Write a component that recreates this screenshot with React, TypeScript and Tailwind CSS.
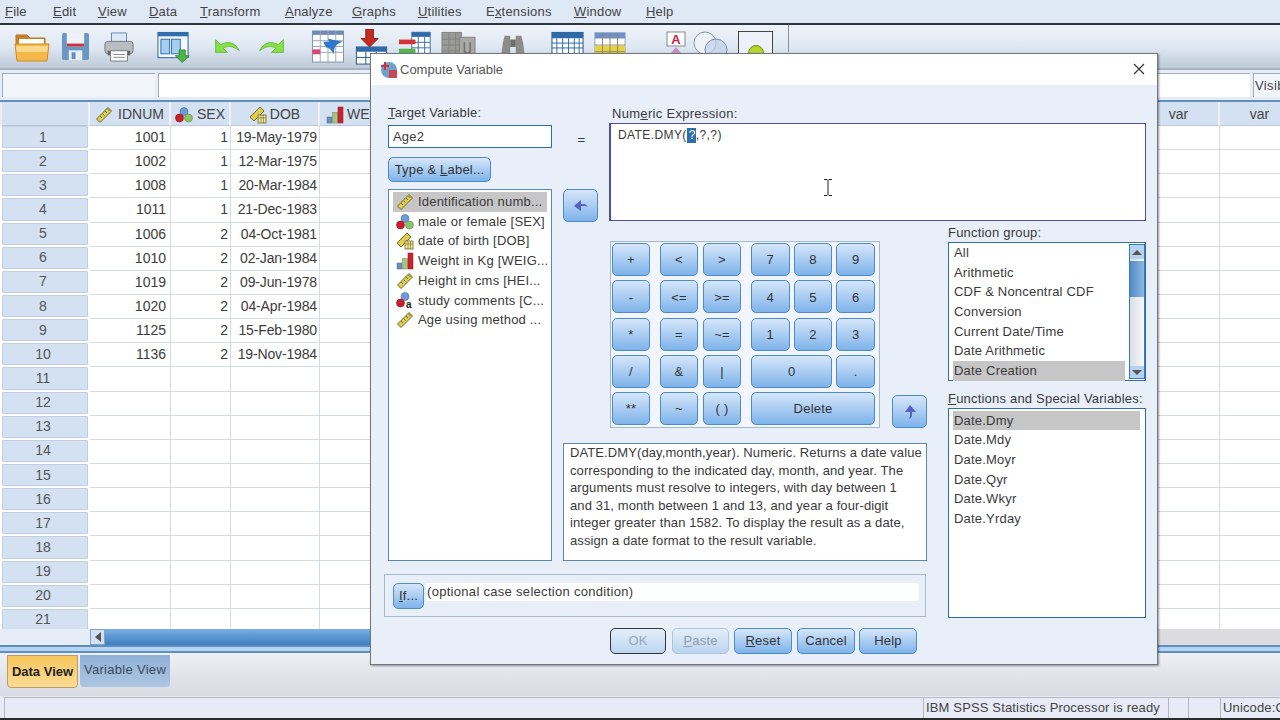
import React from "react"

const font = { fontFamily: '"Liberation Sans", Arial, sans-serif' }

const menus = [
  { u: "F", rest: "ile", w: "w-[48px]" },
  { u: "E", rest: "dit", w: "w-[45px]" },
  { u: "V", rest: "iew", w: "w-[51px]" },
  { u: "D", rest: "ata", w: "w-[51px]" },
  { u: "T", rest: "ransform", w: "w-[85px]" },
  { u: "A", rest: "nalyze", w: "w-[67px]" },
  { u: "G", rest: "raphs", w: "w-[66px]" },
  { u: "U", rest: "tilities", w: "w-[68px]" },
  { pre: "E", u: "x", rest: "tensions", w: "w-[88px]" },
  { u: "W", rest: "indow", w: "w-[72px]" },
  { u: "H", rest: "elp", w: "w-[40px]" },
]

function Ruler({ className = "" }: { className?: string }) {
  return (
    <svg viewBox="0 0 18 18" className={className}>
      <path d="M1.5 13 13 1.5 16.500 5 5 16.500Z" fill="#e0cc50" stroke="#6d6a30" strokeWidth="1" />
      <path d="M5 10l2 2M7.500 7.500l2 2M10 5l2 2M12.500 3l2 2" stroke="#6d6a30" strokeWidth="1" />
    </svg>
  )
}

function Balls({ className = "", str = false }: { className?: string; str?: boolean }) {
  return (
    <svg viewBox="0 0 18 18" className={className}>
      <circle cx="9" cy="5.500" r="4" fill="#6f9bd8" stroke="#4a6fa0" strokeWidth=".6" />
      <circle cx="4.500" cy="12" r="4" fill="#c8202c" stroke="#8e1620" strokeWidth=".6" />
      {str ? (
        <text x="10" y="17" fontSize="10" fontWeight="bold" fill="#222" style={font}>a</text>
      ) : (
        <circle cx="13.500" cy="12" r="4" fill="#8fc26a" stroke="#5f8a45" strokeWidth=".6" />
      )}
    </svg>
  )
}

function DateRuler({ className = "" }: { className?: string }) {
  return (
    <svg viewBox="0 0 18 18" className={className}>
      <path d="M1 11 11 1 15 5 5 15Z" fill="#e0cc50" stroke="#6d6a30" strokeWidth="1" />
      <rect x="9" y="9" width="8" height="8" fill="#f4e68c" stroke="#6d6a30" strokeWidth=".8" />
      <path d="M9 12h8M12 9v8M14.500 9v8" stroke="#6d6a30" strokeWidth=".6" />
    </svg>
  )
}

function Bars({ className = "" }: { className?: string }) {
  return (
    <svg viewBox="0 0 18 18" className={className}>
      <rect x="1" y="11" width="5" height="6" fill="#6e8fb5" stroke="#4c6785" strokeWidth=".5" />
      <rect x="6.500" y="6.500" width="5" height="10.500" fill="#a6c27e" stroke="#718a50" strokeWidth=".5" />
      <rect x="12" y="1" width="5" height="16" fill="#c9242e" stroke="#8e1620" strokeWidth=".5" />
    </svg>
  )
}

function Toolbar() {
  return (
    <div className="flex h-[45px] items-center border-b-2 border-[#a9b3bf] bg-gradient-to-b from-[#f0f4fa] via-[#dfe8f3] to-[#bfcbd9] pl-[14px]">
      <svg viewBox="0 0 36 32" className="h-[32px] w-[36px] shrink-0">
        <path d="M2 9V4h11l3 3h15v10H2Z" fill="#c9822a" stroke="#b8741f" />
        <rect x="5" y="8" width="25" height="9" fill="#fff" />
        <path d="M1 13h34l-2 17H3Z" fill="#f7b84a" stroke="#d08a26" />
        <path d="M2 15h32l-1 6H3Z" fill="#fbd88a" />
      </svg>
      <svg viewBox="0 0 30 30" className="ml-[11px] h-[29px] w-[29px] shrink-0">
        <rect x="1" y="1" width="28" height="28" rx="2" fill="#6a97c2" />
        <rect x="6" y="1" width="18" height="14" fill="#eef2f6" />
        <rect x="6" y="12" width="18" height="3" fill="#c8323a" />
        <rect x="8" y="19" width="14" height="10" fill="#e8edf2" />
        <rect x="11" y="21" width="4" height="7" fill="#5f8fbd" />
      </svg>
      <svg viewBox="0 0 32 32" className="ml-[14px] h-[32px] w-[30px] shrink-0">
        <rect x="8" y="1" width="16" height="10" fill="#dbe8f6" stroke="#5b86b8" />
        <rect x="1" y="10" width="30" height="13" rx="3" fill="#b9bcc0" stroke="#70757b" />
        <rect x="4" y="20" width="24" height="5" fill="#62666b" />
        <path d="M7 20h18v11H7Z" fill="#fff" stroke="#777" />
        <path d="M10 24h12M10 27h12" stroke="#888" />
      </svg>
      <svg viewBox="0 0 34 32" className="ml-[23px] h-[32px] w-[33px] shrink-0">
        <rect x="1" y="1" width="31" height="26" fill="#f4f8fc" stroke="#2f5f95" />
        <rect x="1" y="1" width="31" height="4" fill="#2f6fb0" />
        <rect x="4" y="8" width="9" height="15" fill="#a9cdf0" stroke="#2f6fb0" />
        <rect x="15" y="8" width="9" height="15" fill="#a9cdf0" stroke="#2f6fb0" />
        <path d="M23 19h6v6h4l-7 7-7-7h4Z" fill="#4fb548" stroke="#2f8a32" />
      </svg>
      <svg viewBox="0 0 30 20" className="ml-[23px] h-[17px] w-[29px] shrink-0">
        <path d="M1 2v15h14l-5-5c5-3 11-3 19 3-5-10-14-12-22-7L1 2Z" fill="#86e048" stroke="#63b83a" />
      </svg>
      <svg viewBox="0 0 30 20" className="ml-[15px] h-[17px] w-[29px] shrink-0">
        <path d="M29 2v15H15l5-5c-5-3-11-3-19 3 5-10 14-12 22-7l6-6Z" fill="#86e048" stroke="#63b83a" />
      </svg>
      <svg viewBox="0 0 34 34" className="ml-[25px] h-[33px] w-[34px] shrink-0">
        <rect x="1" y="1" width="32" height="32" fill="#fff" stroke="#8090a8" />
        <path d="M1 1h32v4H1Z" fill="#6f88b8" />
        <path d="M1 11h32M1 17h32M1 23h32M9 1v32M17 1v32M25 1v32" stroke="#9aa6b8" />
        <rect x="1" y="20" width="8" height="5" fill="#d4487a" />
        <path d="M12 12h6l-1-3 15 3c-5 2-9 3-9 13-3-5-5-7-8-7Z" fill="#2f78c8" />
      </svg>
      <svg viewBox="0 0 34 38" className="ml-[10px] h-[36px] w-[33px] shrink-0">
        <path d="M11 0h8v10h5l-9 9-9-9h5Z" fill="#c42a20" stroke="#8a1a14" />
        <rect x="1" y="19" width="32" height="18" fill="#fff" stroke="#1f4f85" />
        <rect x="1" y="19" width="32" height="5" fill="#2f6aa8" />
        <path d="M1 30h32M11 24v13M22 24v13" stroke="#1f4f85" />
      </svg>
      <svg viewBox="0 0 36 32" className="ml-[11px] mt-[5px] h-[32px] w-[33px] shrink-0 self-start">
        <rect x="14" y="1" width="20" height="30" fill="#fff" stroke="#2f6aa8" />
        <rect x="14" y="1" width="20" height="5" fill="#2f6aa8" />
        <path d="M14 12h20M14 18h20M14 24h20M21 6v26M28 6v26" stroke="#2f6aa8" />
        <rect x="0" y="9" width="18" height="5" fill="#d6323a" />
        <rect x="0" y="19" width="18" height="5" fill="#55b548" />
      </svg>
      <svg viewBox="0 0 36 32" className="ml-[9px] mt-[6px] h-[32px] w-[35px] shrink-0 self-start">
        <rect x="1" y="1" width="20" height="30" fill="#9a9a96" stroke="#838380" />
        <path d="M1 8h20M1 14h20M1 20h20M8 1v30M15 1v30" stroke="#838380" />
        <rect x="19" y="6" width="16" height="25" fill="#a8a8a4" stroke="#838380" />
        <path d="M24 11v11M24 20c2 3 5 3 6 0M30 11v11" stroke="#6f6f6c" fill="none" strokeWidth="1.500" />
      </svg>
      <svg viewBox="0 0 28 26" className="ml-[24px] mt-[8px] h-[26px] w-[26px] shrink-0 self-start">
        <path d="M1 26 3 10 5 2h6v24ZM27 26 25 10 23 2h-6v24Z" fill="#8c8c88" />
        <rect x="11" y="6" width="6" height="8" fill="#6f6f6c" />
      </svg>
      <svg viewBox="0 0 34 30" className="ml-[25px] mt-[6px] h-[30px] w-[33px] shrink-0 self-start">
        <rect x="1" y="1" width="32" height="28" fill="#fff" stroke="#1f4f85" />
        <rect x="1" y="1" width="32" height="6" fill="#2f6aa8" />
        <path d="M1 12h32M1 17h32M6 7v16M12 7v16M18 7v16M24 7v16M29 7v16" stroke="#2f6aa8" />
        <rect x="1" y="23" width="32" height="6" fill="#2f6aa8" />
      </svg>
      <svg viewBox="0 0 34 30" className="ml-[10px] mt-[6px] h-[30px] w-[32px] shrink-0 self-start">
        <rect x="1" y="1" width="32" height="28" fill="#fff" stroke="#88a0c0" />
        <rect x="1" y="1" width="32" height="6" fill="#6f90c8" />
        <rect x="1" y="15" width="32" height="14" fill="#e8d040" />
        <path d="M1 14h32M1 21h32M9 1v28M17 1v28M25 1v28" stroke="#8a8a60" />
      </svg>
      <svg viewBox="0 0 20 26" className="ml-[40px] mt-[6px] h-[26px] w-[20px] shrink-0 self-start">
        <rect x="1" y="1" width="18" height="14" fill="#fff" stroke="#888" />
        <text x="10" y="13" textAnchor="middle" fontSize="13" fontWeight="bold" fill="#c8204a" style={font}>A</text>
        <path d="M10 16l5 6H5Z" fill="#c98ac8" />
      </svg>
      <svg viewBox="0 0 36 26" className="ml-[7px] mt-[6px] h-[26px] w-[36px] shrink-0 self-start">
        <circle cx="12" cy="12" r="11" fill="#eef3fa" stroke="#8a97a8" />
        <circle cx="23" cy="19" r="11" fill="#c2cfe8" fillOpacity=".7" stroke="#7a8ab8" />
      </svg>
      <div className="ml-[9px] mt-[6px] flex h-[40px] w-[35px] shrink-0 justify-center self-start border border-[#444] bg-[#eef2f8] pt-[13px]">
        <div className="h-[16px] w-[16px] rounded-full border border-[#6a8a10] bg-[#b7d52c]" />
      </div>
      <div className="ml-[15px] h-[27px] w-px shrink-0 self-start bg-[#8a939e]" />
    </div>
  )
}

function FormulaRow() {
  return (
    <div className="flex h-[30px] gap-[3px] bg-[#e7edf8] pl-[2px] pt-[3px]">
      <div className="h-[24px] w-[153px] border-l border-t border-[#a7adb6] bg-[#f2f5fb]" />
      <div className="h-[24px] flex-1 border-l border-t border-[#a7adb6] bg-white" />
      <div className="h-[24px] w-[27px] overflow-hidden whitespace-nowrap border-l border-t border-[#a7adb6] bg-[#f2f5fb] pl-px text-[13px] leading-[24px] tracking-[0.4px] text-[#444]">Visib</div>
    </div>
  )
}

const people = [
  ["1001", "1", "19-May-1979"],
  ["1002", "1", "12-Mar-1975"],
  ["1008", "1", "20-Mar-1984"],
  ["1011", "1", "21-Dec-1983"],
  ["1006", "2", "04-Oct-1981"],
  ["1010", "2", "02-Jan-1984"],
  ["1019", "2", "09-Jun-1978"],
  ["1020", "2", "04-Apr-1984"],
  ["1125", "2", "15-Feb-1980"],
  ["1136", "2", "19-Nov-1984"],
]

const cols = ["w-[81px] pr-[4px]", "w-[60px] pr-[2px]", "w-[89px] pr-[2px] tracking-[-0.15px]", "w-[80px] pr-[2px]"]

function HeadCell({ className, children }: { className: string; children?: React.ReactNode }) {
  return (
    <div className={`flex h-[24px] shrink-0 items-center justify-center border-b border-r-2 border-b-[#b9c8da] border-r-[#eef3fa] bg-[#d3e1f2] pt-[2px] text-[14px] text-[#444] ${className}`}>
      {children}
    </div>
  )
}

function DataGrid() {
  const rows = Array.from({ length: 21 }, (_, i) => i)
  return (
    <div className="border-t-2 border-[#5f90bd] bg-white">
      <div className="flex h-[24px] items-stretch bg-[#e6edf7] pl-[2px]">
        <HeadCell className="w-[88px]" />
        <HeadCell className="w-[81px] gap-[5px]"><Ruler className="h-[18px] w-[18px]" />IDNUM</HeadCell>
        <HeadCell className="w-[60px] gap-[4px]"><Balls className="h-[18px] w-[18px]" />SEX</HeadCell>
        <HeadCell className="w-[89px] gap-[3px]"><DateRuler className="h-[18px] w-[18px]" />DOB</HeadCell>
        <HeadCell className="w-[80px] justify-start gap-[3px] pl-[6px]"><Bars className="h-[18px] w-[18px]" />WE</HeadCell>
        <div className="w-[739px] shrink-0" />
        <HeadCell className="w-[81px]">var</HeadCell>
        <HeadCell className="w-[81px]">var</HeadCell>
      </div>
      <div className="h-[503px] overflow-hidden">
        {rows.map((i) => (
          <div key={i} className="flex h-[24.150px] pl-[2px]">
            <div className="flex w-[88px] shrink-0 items-stretch pb-[2px] pr-[2px]">
              <div className="flex flex-1 items-center justify-center rounded-[1px] border border-[#c0cfe0] bg-[#d3e1f2] pr-[4px] text-[14px] text-[#555]">
                {i + 1}
              </div>
            </div>
            {cols.map((w, c) => (
              <div key={c} className={`flex ${w} shrink-0 items-center justify-end border-b border-r border-[#d5dbe3] text-[14px] text-[#3c3c3c]`}>
                {people[i]?.[c] ?? ""}
              </div>
            ))}
            <div className="w-[739px] shrink-0 border-b border-[#d5dbe3]" />
            <div className="w-[81px] shrink-0 border-b border-r border-[#d5dbe3]" />
            <div className="w-[81px] shrink-0 border-b border-r border-[#d5dbe3]" />
          </div>
        ))}
      </div>
      <div className="flex h-[16px] bg-[#e6edf7] pl-[90px]">
        <div className="flex w-[15px] shrink-0 items-center justify-center border border-[#7fa3c9] bg-[#d3e1f2]">
          <div className="h-0 w-0 border-y-[5px] border-r-[6px] border-y-transparent border-r-[#555]" />
        </div>
        <div className="w-[900px] shrink-0 bg-gradient-to-b from-[#7cb0e4] via-[#5b96d2] to-[#3f7fbf]" />
        <div className="flex-1 bg-[#dcdce0]" />
      </div>
    </div>
  )
}

const btn = "flex items-center justify-center rounded-[5px] border border-[#4d8cc6] bg-gradient-to-b from-[#d6e6f9] to-[#7eb3ea] text-[#333]"

function KeyBtn({ label, className = "" }: { label: string; className?: string }) {
  return <div className={`${btn} h-[33px] pt-[1px] text-[13px] ${className}`}>{label}</div>
}

function ArrowBtn({ up = false }: { up?: boolean }) {
  return (
    <div className={`${btn} h-[33px] w-[35px]`}>
      <svg viewBox="0 0 16 16" className="h-[16px] w-[16px]">
        {up ? (
          <path d="M8 1l6 7H10v3c0 2-1 3-3 4 .5-1 1-2 1-4V8H3Z" fill="#5a60c6" />
        ) : (
          <path d="M1 8l7-6v4h3c2 0 3 2 4 3-1-.5-2-1-4-1H8v5Z" fill="#5a60c6" />
        )}
      </svg>
    </div>
  )
}

const vars = [
  { label: "Identification numb...", icon: <Ruler className="h-[18px] w-[18px]" /> },
  { label: "male or female [SEX]", icon: <Balls className="h-[18px] w-[18px]" /> },
  { label: "date of birth [DOB]", icon: <DateRuler className="h-[18px] w-[18px]" /> },
  { label: "Weight in Kg [WEIG...", icon: <Bars className="h-[18px] w-[18px]" /> },
  { label: "Height in cms [HEI...", icon: <Ruler className="h-[18px] w-[18px]" /> },
  { label: "study comments [C...", icon: <Balls className="h-[18px] w-[18px]" str /> },
  { label: "Age using method ...", icon: <Ruler className="h-[18px] w-[18px]" /> },
]

const groups = ["All", "Arithmetic", "CDF & Noncentral CDF", "Conversion", "Current Date/Time", "Date Arithmetic", "Date Creation"]
const funcs = ["Date.Dmy", "Date.Mdy", "Date.Moyr", "Date.Qyr", "Date.Wkyr", "Date.Yrday"]

const helpLines = [
  "DATE.DMY(day,month,year). Numeric. Returns a date value",
  "corresponding to the indicated day, month, and year. The",
  "arguments must resolve to integers, with day between 1",
  "and 31, month between 1 and 13, and year a four-digit",
  "integer greater than 1582. To display the result as a date,",
  "assign a date format to the result variable.",
]

function Dialog() {
  return (
    <div className="absolute left-[370px] top-[53px] h-[612px] w-[788px] border border-[#70767e] bg-[#e8eff9] text-[13px] tracking-[0.2px] text-[#3a3a3a] shadow-[1px_1px_2px_rgba(0,0,0,0.4)]">
      <div className="flex h-[31px] items-center bg-white pl-[9px] pr-[12px] tracking-normal text-[#555]">
        <svg viewBox="0 0 18 18" className="h-[18px] w-[18px]">
          <circle cx="9" cy="9" r="8" fill="#6fa0c8" />
          <path d="M5 1v8M1 5h8" stroke="#d03040" strokeWidth="2" />
          <rect x="9" y="9" width="8" height="8" fill="#c8485a" />
        </svg>
        <span className="ml-[2px] flex-1">Compute Variable</span>
        <svg viewBox="0 0 12 12" className="mb-[2px] h-[12px] w-[12px]">
          <path d="M1 1l10 10M11 1 1 11" stroke="#333" strokeWidth="1.200" fill="none" />
        </svg>
      </div>

      <div className="ml-[17px] mt-[19px] grid grid-cols-[164px_58px_317px_21px_198px] grid-rows-[85px_36px_336px_57px]">
        <div className="col-start-1 row-start-1">
          <div className="h-[21px] leading-[18px]"><span className="underline">T</span>arget Variable:</div>
          <div className="h-[23px] border border-[#2f6ea8] bg-white pl-[4px] leading-[21px]">Age2</div>
          <div className={`${btn} mt-[9px] h-[25px] w-[103px]`}>
            <span>Type &amp; <span className="underline">L</span>abel...</span>
          </div>
        </div>

        <div className="col-start-1 row-span-2 row-start-2 h-[372px] border border-[#5c88b0] bg-white pl-[4px] pt-[2px]">
          {vars.map((v, i) => (
            <div key={v.label} className={`flex h-[19.700px] items-center gap-[4px] pl-[3px] ${i === 0 ? "w-[154px] bg-[#c6c6c6]" : ""}`}>
              {v.icon}
              <span className="whitespace-nowrap">{v.label}</span>
            </div>
          ))}
        </div>

        <div className="col-start-2 row-start-1 ml-[12px] w-[35px] pt-[26px] text-center">=</div>
        <div className="col-start-2 row-start-2 pl-[11px]"><ArrowBtn /></div>

        <div className="col-span-3 col-start-3 row-span-2 row-start-1 -ml-px">
          <div className="h-[19px] pl-[3px] leading-[20px] tracking-[0.3px]">Num<span className="underline">e</span>ric Expression:</div>
          <div className="h-[98px] w-[537px] border border-l-2 border-[#4a4fb0] bg-white pl-[7px] pt-[2px] text-[12px] tracking-[0.4px]">
            DATE.DMY(<span className="inline-block bg-[#2f6fa8] pl-[2px] leading-[15px] text-white">?</span>,?,?)
          </div>
        </div>

        <div className="col-span-2 col-start-2 row-start-3 pl-[11px]">
          <div className="mt-[16px] flex items-end gap-[12px] pl-[47px]">
            <div className="flex h-[187px] w-[270px] gap-[10px] border border-[#a5b8cc] bg-[#f2f6fc] pl-[1px] pt-[1px]">
              <div className="grid w-[38px] gap-y-[4.250px] self-start">
                {["+", "-", "*", "/", "**"].map((k) => <KeyBtn key={k} label={k} />)}
              </div>
              <div className="grid w-[81px] grid-cols-2 gap-x-[5px] gap-y-[4.250px] self-start">
                {["<", ">", "<=", ">=", "=", "~=", "&", "|", "~", "( )"].map((k) => <KeyBtn key={k} label={k} />)}
              </div>
              <div className="grid w-[124px] grid-cols-3 gap-x-[4px] gap-y-[4.250px] self-start">
                {["7", "8", "9", "4", "5", "6", "1", "2", "3"].map((k) => <KeyBtn key={k} label={k} />)}
                <KeyBtn label="0" className="col-span-2" />
                <KeyBtn label="." />
                <KeyBtn label="Delete" className="col-span-3" />
              </div>
            </div>
            <ArrowBtn up />
          </div>
          <div className="mt-[15px] h-[118px] w-[364px] border border-[#5c88b0] bg-white pl-[6px] leading-[17.600px] tracking-[0.1px]">
            {helpLines.map((line) => (
              <div key={line} className="whitespace-nowrap">{line}</div>
            ))}
          </div>
        </div>

        <div className="col-start-5 row-span-2 row-start-3">
          <div className="h-[17px] leading-[15px]">Function <span className="underline">g</span>roup:</div>
          <div className="flex h-[139px] border border-[#2f6ea8] bg-white pl-[4px]">
            <div className="w-[172px]">
              {groups.map((g) => (
                <div key={g} className={`h-[19.700px] pl-[1px] leading-[19.700px] ${g === "Date Creation" ? "bg-[#c6c6c6]" : ""}`}>{g}</div>
              ))}
            </div>
            <div className="ml-[4px] mt-px flex h-[135px] w-[16px] flex-col border border-[#3a78b8] bg-gradient-to-r from-[#d8dde6] to-[#f8f9fb]">
              <div className="flex h-[14px] items-center justify-center bg-[#b5d2f0]">
                <div className="h-0 w-0 border-x-[5px] border-b-[5px] border-x-transparent border-b-[#555]" />
              </div>
              <div className="mt-[2px] h-[36px] bg-gradient-to-r from-[#4f8cc8] to-[#8fb8e0]" />
              <div className="flex-1" />
              <div className="flex h-[12px] items-center justify-center bg-[#b5d2f0]">
                <div className="h-0 w-0 border-x-[5px] border-t-[5px] border-x-transparent border-t-[#555]" />
              </div>
            </div>
          </div>
          <div className="h-[27px] whitespace-nowrap pt-[9px] leading-[18px]"><span className="underline">F</span>unctions and Special Variables:</div>
          <div className="h-[210px] border border-[#2f6ea8] bg-white pl-[4px] pr-[5px] pt-[1.500px]">
            {funcs.map((f, i) => (
              <div key={f} className={`h-[19.700px] pl-[1px] leading-[19.700px] ${i === 0 ? "bg-[#c6c6c6]" : ""}`}>{f}</div>
            ))}
          </div>
        </div>

        <div className="col-span-3 col-start-1 row-start-4 -ml-[4px] mt-[13px]">
          <div className="flex h-[43px] w-[542px] items-start border border-[#a5b8cc] pl-[8px] pt-[8px]">
            <div className={`${btn} h-[26px] w-[31px]`}><span><span className="underline">I</span>f...</span></div>
            <div className="ml-[2px] h-[18px] w-[493px] bg-white pl-px leading-[17px] tracking-[0.3px]">(optional case selection condition)</div>
          </div>
        </div>
      </div>

      <div className="ml-[239px] mt-[10px] flex">
        <div className="flex h-[26px] w-[56px] items-center justify-center rounded-[5px] border border-[#333] bg-gradient-to-b from-[#e4eefa] to-[#bcd5f0] text-[#9aa8b8]">OK</div>
        <div className="ml-[6px] flex h-[26px] w-[57px] items-center justify-center rounded-[5px] border border-[#a8c5e2] bg-gradient-to-b from-[#e4eefa] to-[#bcd5f0] text-[#8f9cac]"><span><span className="underline">P</span>aste</span></div>
        <div className={`${btn} ml-[5px] h-[26px] w-[58px]`}><span><span className="underline">R</span>eset</span></div>
        <div className={`${btn} ml-[5px] h-[26px] w-[58px]`}>Cancel</div>
        <div className={`${btn} ml-[4px] h-[26px] w-[58px]`}>Help</div>
      </div>

      <svg viewBox="0 0 10 18" className="absolute left-[452px] top-[124px] h-[19px] w-[10px]">
        <path d="M1 1h3l1 1 1-1h3M5 2v14M1 17h3l1-1 1 1h3" stroke="#222" fill="none" />
      </svg>
    </div>
  )
}

export default function App() {
  return (
    <div className="relative h-[720px] w-[1280px] overflow-hidden bg-[#e6edf7]" style={font}>
      <div className="flex h-[25px] items-center border-b-2 border-[#2c3540] bg-[#dfe8f5] pl-[5px] text-[13px] tracking-[0.2px] text-[#444]">
        {menus.map((m) => (
          <span key={m.rest} className={`${m.w} shrink-0`}>
            {m.pre}<span className="underline">{m.u}</span>{m.rest}
          </span>
        ))}
      </div>
      <Toolbar />
      <FormulaRow />
      <div className="h-[545px] overflow-hidden">
        <DataGrid />
      </div>
      <div className="h-[8px] border-y-2 border-y-[#5f90bd] bg-[#b5d4f2]" />
      <div className="flex h-[43px] items-start bg-gradient-to-b from-[#eef0f6] to-[#d9dae2] pl-[7px] pt-[2px]">
        <div className="flex h-[33px] w-[71px] items-center justify-center rounded-b-[4px] border border-[#b3a06a] bg-gradient-to-b from-[#f6c65c] to-[#fbdc95] text-[13px] font-bold text-[#222]">
          Data View
        </div>
        <div className="ml-[2px] flex h-[32px] w-[90px] items-center justify-center rounded-b-[4px] bg-gradient-to-b from-[#8fb0d6] to-[#adc6e2] pb-[2px] text-[13px] tracking-[0.3px] text-[#3c4a5c]">
          Variable View
        </div>
      </div>
      <div className="flex h-[22px] items-stretch bg-[#e8ebf5] pl-[4px] pt-px text-[13px] tracking-[0.15px] text-[#444]">
        <div className="w-[919px] border-l border-t border-[#b4b8c0]" />
        <div className="w-[245px] whitespace-nowrap border-l border-t border-[#b4b8c0] pl-[2px] leading-[20px]">IBM SPSS Statistics Processor is ready</div>
        <div className="w-[20px] border-l border-t border-[#b4b8c0]" />
        <div className="w-[32px] border-l border-t border-[#b4b8c0]" />
        <div className="flex-1 overflow-hidden whitespace-nowrap border-l border-t border-[#b4b8c0] pl-[2px] leading-[20px]">Unicode:ON</div>
      </div>
      <div className="h-[2px] bg-[#2a2a2a]" />
      <Dialog />
    </div>
  )
}
